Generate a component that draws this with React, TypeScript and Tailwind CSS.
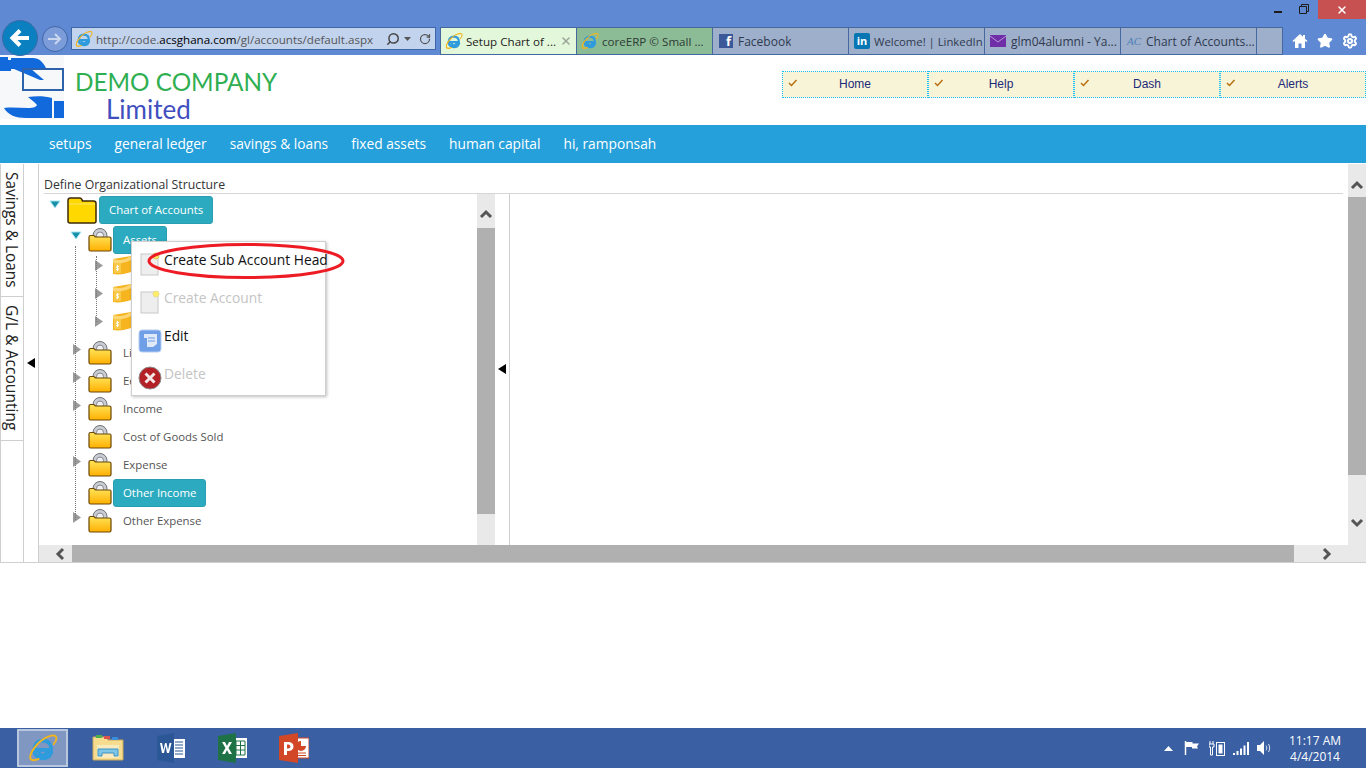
import { Star, Settings, RotateCw, Search, X } from 'lucide-react';

const ui = { fontFamily: '"Open Sans", "Noto Sans", sans-serif' };

function IeIcon({ size = 18 }: { size?: number }) {
  return (
    <svg width={size} height={size} viewBox="0 0 24 24" fill="none" className="shrink-0">
      <path d="M5 13.500h13.500c.3-4.500-2.400-7.500-6.500-7.500-4.300 0-7 3.300-7 7.300 0 4.200 2.900 7 7 7 3 0 5.200-1.300 6.200-3.800h-3.600c-.6.900-1.500 1.300-2.600 1.300-2 0-3.200-1.200-3.300-3" stroke="#2e9bdc" strokeWidth="3" />
      <path d="M2 20.500C.5 17 7 8 13 4.500c4-2.300 8.500-3.500 9.500-1.500.8 1.500-.3 3.800-2 6" stroke="#f2b51d" strokeWidth="1.500" strokeLinecap="round" />
      <path d="M2 20.500c1 2 4 1.500 6.500.2" stroke="#f2b51d" strokeWidth="1.500" strokeLinecap="round" />
    </svg>
  );
}

function Tab({ label, icon, tone, children }: { label: string; icon: React.ReactNode; tone: string; children?: React.ReactNode }) {
  return (
    <div className={`flex h-full w-[136px] shrink-0 items-center gap-[3px] border-r border-[#44689f] pl-[4px] ${tone}`}>
      {icon}
      <span className="overflow-hidden whitespace-nowrap pt-[2px]">{label}</span>
      {children}
    </div>
  );
}

function MenuCell({ label }: { label: string }) {
  return (
    <div className="relative flex h-full w-[146px] items-center justify-center border border-dotted border-[#19c2ff] pb-[1px] text-[12px] text-[#1b2a78]" style={{ fontFamily: '"Liberation Sans", sans-serif' }}>
      <svg width="10" height="8" viewBox="0 0 10 8" className="absolute left-[5px] top-[7px]">
        <path d="M1 4l2.500 2.500L8.500 1" stroke="#b8700f" strokeWidth="1.500" fill="none" />
      </svg>
      {label}
    </div>
  );
}

function Logo() {
  return (
    <svg width="64" height="64" viewBox="0 0 64 64" className="shrink-0">
      <rect width="64" height="64" fill="#f7f8fa" />
      <path d="M0 2h8v3h3V3h22c6 0 10 4 13 10H30l14 12h-4L14 14h-3v2H0z" fill="#1269dc" />
      <rect x="23" y="14" width="40" height="21" fill="none" stroke="#2f62ad" strokeWidth="2" />
      <path d="M28 42c8-1 17-1 24 1v20H26C16 63 8 60 4 53c8-1 16 0 24 0 6 0 8-1 9-3-2-3-6-5-9-8z" fill="#1269dc" />
      <rect x="54" y="46" width="10" height="17" fill="#1269dc" />
    </svg>
  );
}

function Folder({ big, coin }: { big?: boolean; coin?: boolean }) {
  if (big) {
    return (
      <svg width="30" height="27" viewBox="0 0 30 27" className="shrink-0">
        <path d="M1 3.500C1 2 2 1 3.500 1h9C14 1 15 2 15.500 4h11C28 4 29 5 29 6.500V24c0 1-1 2-2 2H3c-1 0-2-1-2-2z" fill="#ffd800" stroke="#3c2a05" strokeWidth="1.500" />
        <path d="M2 7h26" stroke="#ffe566" />
      </svg>
    );
  }
  if (coin) {
    return (
      <svg width="20" height="20" viewBox="0 0 20 20" className="shrink-0">
        <path d="M1 4l18-3v16c-6 2-12 3-18 2z" fill="#f6b41f" />
        <path d="M1 4c6 2 12 1 18-3v4C13 8 7 9 1 8z" fill="#fbd777" />
        <rect x="2" y="8" width="7" height="10" fill="#f9c94b" />
        <path d="M5.500 10v6M7 11.500H4.800c-1 .8 0 1.500.7 1.500s1.700.8.700 1.700H4" stroke="#fff" strokeWidth="1" fill="none" />
      </svg>
    );
  }
  return (
    <svg width="24" height="24" viewBox="0 0 24 24" className="shrink-0">
      <defs>
        <linearGradient id="folderFill" x1="0" y1="0" x2="0" y2="1">
          <stop offset="0" stopColor="#ffe45a" />
          <stop offset="1" stopColor="#ffaf00" />
        </linearGradient>
      </defs>
      <circle cx="12" cy="7.500" r="7" fill="#c9ccd2" stroke="#6d6f73" />
      <circle cx="12" cy="7.500" r="3.500" fill="#eef0f2" stroke="#85888d" />
      <path d="M1 9c0-.8.500-1.500 1.500-1.500h3c1 0 1.500 1.500 2.500 1.500h13.500c.8 0 1.500.7 1.500 1.500V21.500c0 1-.7 1.500-1.500 1.500H2.500C1.500 23 1 22.500 1 21.500z" fill="url(#folderFill)" stroke="#6b4708" strokeWidth="1.200" />
    </svg>
  );
}

function Expander({ open }: { open?: boolean }) {
  if (open) {
    return (
      <svg width="12" height="10" viewBox="0 0 12 10" className="shrink-0">
        <path d="M1 1h10L6 8z" fill="#1c8fa8" stroke="#9ee8f5" strokeWidth="1" />
      </svg>
    );
  }
  return (
    <svg width="8" height="11" viewBox="0 0 8 11" className="shrink-0">
      <path d="M0 0l8 5.500L0 11z" fill="#9a9a9a" />
    </svg>
  );
}

function Pill({ label }: { label: string }) {
  return (
    <span className="flex h-[28px] items-center rounded-[3px] border border-[#2a9fb2] bg-[#2cabc0] px-[9px] whitespace-nowrap text-white">
      {label}
    </span>
  );
}

function TreeRow({ label, expander, selected }: { label?: string; expander?: boolean; selected?: boolean }) {
  return (
    <div className="flex h-[28px] items-center">
      <div className="-mt-[8px] flex w-[49px] justify-start pl-[34px]">
        {expander && <Expander />}
      </div>
      <Folder />
      <div className="ml-[1px]">
        {selected ? <Pill label={label ?? ''} /> : <span className="whitespace-nowrap pl-[10px] text-[#555]">{label}</span>}
      </div>
    </div>
  );
}

function SubRow() {
  return (
    <div className="flex h-[28px] items-center">
      <div className="flex w-[73px] pl-[56px]">
        <Expander />
      </div>
      <Folder coin />
    </div>
  );
}

function Chevron({ dir }: { dir: 'up' | 'down' | 'left' | 'right' }) {
  const d = {
    up: 'M2 9l5-5 5 5',
    down: 'M2 4l5 5 5-5',
    left: 'M9 2L4 7l5 5',
    right: 'M4 2l5 5-5 5',
  }[dir];
  return (
    <svg width="14" height="14" viewBox="0 0 14 14">
      <path d={d} fill="none" stroke="#555" strokeWidth="3" />
    </svg>
  );
}

function CaretLeft() {
  return (
    <svg width="8" height="10" viewBox="0 0 8 10">
      <path d="M8 0v10L0 5z" fill="#000" />
    </svg>
  );
}

function PageIcon({ faded }: { faded?: boolean }) {
  return (
    <svg width="20" height="24" viewBox="0 0 20 24" className="mt-[8px] shrink-0">
      <rect x="1" y="2" width="17" height="21" fill="#eeeeee" stroke="#c8c8c8" />
      <circle cx="16" cy="4" r="3" fill="#ffee66" stroke={faded ? '#e8dc90' : '#d8c850'} />
    </svg>
  );
}

function ContextMenu() {
  return (
    <div className="absolute left-[92px] top-[47px] z-10 flex h-[155px] w-[195px] flex-col border border-[#cfcfcf] bg-white pl-[6px] pt-[2px] text-[13.800px] shadow-[1px_1px_3px_rgba(0,0,0,0.25)]">
      <div className="flex h-[38px] items-start gap-[4px] pl-[2px]">
        <PageIcon />
        <span className="mt-[6px] whitespace-nowrap text-[#111]">Create Sub Account Head</span>
      </div>
      <div className="flex h-[38px] items-start gap-[4px] pl-[2px]">
        <PageIcon faded />
        <span className="mt-[6px] whitespace-nowrap text-[#c4c4c4]">Create Account</span>
      </div>
      <div className="flex h-[38px] items-start gap-[2px]">
        <svg width="24" height="24" viewBox="0 0 24 24" className="mt-[9px] shrink-0">
          <rect x="1" y="1" width="22" height="22" rx="3" fill="#6f9fe6" stroke="#b5cdf0" />
          <path d="M6 5h13v10l-4 3H9V9H6z" fill="#dfe9f8" />
          <path d="M10 9h7M10 12h7" stroke="#6f9fe6" />
        </svg>
        <span className="mt-[6px] text-[#111]">Edit</span>
      </div>
      <div className="flex h-[38px] items-start gap-[2px]">
        <svg width="24" height="24" viewBox="0 0 24 24" className="mt-[9px] shrink-0">
          <circle cx="12" cy="12" r="11" fill="#b32026" stroke="#8c8c8c" />
          <path d="M7.500 7.500l9 9M16.500 7.500l-9 9" stroke="#f3e7e7" strokeWidth="3" />
        </svg>
        <span className="mt-[7px] text-[#c4c4c4]">Delete</span>
      </div>
      {/* hand drawn annotation round the first item */}
      <svg width="200" height="38" viewBox="0 0 200 38" className="absolute left-[15px] top-[0px] overflow-visible">
        <ellipse cx="99" cy="19" rx="97" ry="16.500" fill="none" stroke="#ed1c24" strokeWidth="3" />
      </svg>
    </div>
  );
}

function Tree() {
  return (
    <div className="relative h-full min-w-0 flex-1 text-[11.400px]">
      {/* dotted connectors */}
      <div className="absolute left-[36px] top-[52px] h-[274px] border-l border-dotted border-[#777]" />
      <div className="absolute left-[57px] top-[62px] h-[66px] border-l border-dotted border-[#777]" />
      <ContextMenu />
      <div className="flex flex-col pt-[2px]">
        <div className="flex h-[28px] items-center">
          <div className="-mt-[10px] w-[28px] pl-[10px]">
            <Expander open />
          </div>
          <Folder big />
          <div className="ml-[2px]">
            <Pill label="Chart of Accounts" />
          </div>
        </div>
        <div className="mt-[2px] flex h-[28px] items-center">
          <div className="-mt-[8px] w-[49px] pl-[31px]">
            <Expander open />
          </div>
          <Folder />
          <div className="ml-[1px]">
            <Pill label="Assets" />
          </div>
        </div>
        <div className="-mt-[3px] flex flex-col">
          <SubRow />
          <SubRow />
          <SubRow />
        </div>
        <div className="mt-[4px] flex flex-col">
          <TreeRow label="Liabilities" expander />
          <TreeRow label="Equity" expander />
          <TreeRow label="Income" expander />
          <TreeRow label="Cost of Goods Sold" />
          <TreeRow label="Expense" expander />
          <TreeRow label="Other Income" selected />
          <TreeRow label="Other Expense" expander />
        </div>
      </div>
    </div>
  );
}

function Workspace() {
  return (
    <div className="flex h-[400px] border-b border-[#cfcfcf] border-t border-t-white">
      {/* vertical tabs */}
      <div className="flex w-[24px] shrink-0 flex-col border-x border-[#cfcfcf]">
        <div className="flex h-[133px] items-center justify-start border-b border-[#cfcfcf] pt-[8px] pr-[1px] [writing-mode:vertical-rl]">
          <span className="whitespace-nowrap text-[15.400px] text-[#222]">Savings &amp; Loans</span>
        </div>
        <div className="flex h-[144px] items-center justify-start border-b border-[#cfcfcf] pt-[8px] pr-[1px] [writing-mode:vertical-rl]">
          <span className="whitespace-nowrap text-[15.600px] text-[#222]">G/L &amp; Accounting</span>
        </div>
      </div>
      <div className="flex w-[15px] shrink-0 items-center justify-center border-r border-[#cfcfcf]">
        <CaretLeft />
      </div>
      <div className="flex min-w-0 flex-1 flex-col">
        <div className="flex min-h-0 flex-1">
          <div className="flex min-w-0 flex-1 flex-col">
            <div className="mx-[5px] flex h-[30px] items-end border-b border-[#d6d6d6] pb-0 text-[12.300px] leading-[16px] text-[#333]">
              Define Organizational Structure
            </div>
            <div className="flex min-h-0 flex-1">
              <Tree />
              {/* tree scrollbar */}
              <div className="flex w-[18px] shrink-0 flex-col bg-[#e9e9e9]">
                <div className="flex h-[34px] items-end justify-center pb-[6px]">
                  <Chevron dir="up" />
                </div>
                <div className="h-[286px] bg-[#b0b0b0]" />
              </div>
              <div className="flex w-[15px] shrink-0 items-center justify-center border-r border-[#cfcfcf] pb-[1px]">
                <CaretLeft />
              </div>
              <div className="w-[838px] shrink-0" />
            </div>
          </div>
          {/* page scrollbar */}
          <div className="flex w-[18px] shrink-0 flex-col bg-[#e9e9e9]">
            <div className="flex h-[33px] items-end justify-center pb-[4px]">
              <Chevron dir="up" />
            </div>
            <div className="h-[278px] bg-[#b0b0b0]" />
            <div className="flex flex-1 items-end justify-center pb-[15px]">
              <Chevron dir="down" />
            </div>
          </div>
        </div>
        {/* bottom scrollbar */}
        <div className="flex h-[17px] shrink-0 bg-[#e9e9e9]">
          <div className="flex w-[33px] items-center justify-center pl-[11px]">
            <Chevron dir="left" />
          </div>
          <div className="w-[1222px] bg-[#b0b0b0]" />
          <div className="flex flex-1 items-center justify-start pl-[26px]">
            <Chevron dir="right" />
          </div>
        </div>
      </div>
    </div>
  );
}

function Taskbar() {
  return (
    <div className="flex h-[40px] items-center bg-[#3a5fa3] text-white">
      <div className="ml-[17px] flex h-[38px] w-[51px] items-center justify-center border-2 border-[#b9c7de] bg-[#7f97c1]">
        <IeIcon size={30} />
      </div>
      <svg width="32" height="32" viewBox="0 0 32 32" className="ml-[24px]">
        <path d="M1 5h13l2 3h15v20H1z" fill="#f6dc8e" stroke="#caa95a" />
        <path d="M4 3h6v3H4z" fill="#4cae4f" />
        <path d="M12 4h6v3h-6z" fill="#d9534f" />
        <path d="M20 5h6v3h-6z" fill="#3a8fdc" />
        <path d="M5 13h22v13H5z" fill="#f9ebbd" />
        <path d="M6 24v-7h20v7h-4v-3H10v3z" fill="#7cc6e8" stroke="#3f93c4" />
      </svg>
      <svg width="28" height="30" viewBox="0 0 28 30" className="ml-[33px]">
        <path d="M15 6h13v19H15z" fill="#fff" />
        <path d="M18 9h8M18 12h8M18 15h8M18 18h8M18 21h8" stroke="#2b5797" />
        <path d="M0 3l17-3v30L0 27z" fill="#2b5797" />
        <path d="M3 10h2l1.500 7L8 10h1.500l1.500 7 1.500-7h2l-2.500 10h-2L8.500 13 7 20H5z" fill="#fff" />
      </svg>
      <svg width="29" height="30" viewBox="0 0 29 30" className="ml-[33px]">
        <path d="M15 5h14v20H15z" fill="#fff" />
        <path d="M18 8h9v14h-9zM18 12.500h9M18 17h9M22.500 8v14" fill="none" stroke="#1f7246" />
        <path d="M0 3l18-3v30L0 27z" fill="#1f7246" />
        <path d="M4 9h3l2 4 2-4h3l-3.500 6 3.500 6h-3l-2-4-2 4H4l3.500-6z" fill="#fff" />
      </svg>
      <svg width="30" height="30" viewBox="0 0 30 30" className="ml-[32px]">
        <path d="M15 5h15v20H15z" fill="#fff" stroke="#d24726" />
        <path d="M22 8a5 5 0 1 0 5 5h-5z" fill="#d24726" />
        <path d="M18 20h9M18 22.500h9" stroke="#d24726" />
        <path d="M0 3l19-3v30L0 27z" fill="#d24726" />
        <path d="M5 9h5c6 0 6 9 0 9H8v4H5zM8 11.500v4h1.500c2.500 0 2.500-4 0-4z" fill="#fff" fillRule="evenodd" />
      </svg>
      <div className="ml-auto flex items-center">
        <svg width="9" height="5" viewBox="0 0 9 5"><path d="M0 5l4.500-5L9 5z" fill="#fff" /></svg>
        <svg width="16" height="14" viewBox="0 0 16 14" className="ml-[11px]">
          <path d="M1.500 0v14" stroke="#fff" strokeWidth="1.500" />
          <path d="M2 1h6.500v1.500H15l-2 3 1 2H8V6H2z" fill="#fff" />
        </svg>
        <svg width="16" height="16" viewBox="0 0 16 16" className="ml-[9px]">
          <path d="M1 1v3M4 1v3M0 4h5v3H3.500v8H1.500V7H0z" fill="none" stroke="#fff" />
          <rect x="7.500" y="2.500" width="8" height="13" fill="none" stroke="#fff" />
          <rect x="9.500" y="4.500" width="4" height="9" fill="#fff" />
        </svg>
        <svg width="16" height="13" viewBox="0 0 16 13" className="ml-[8px]">
          <path d="M0 11h2v2H0zM3.500 9h2v4h-2zM7 6.500h2V13H7zM10.500 3.500h2V13h-2z" fill="#fff" />
          <path d="M14 0h2v13h-2z" fill="#fff" />
        </svg>
        <svg width="15" height="14" viewBox="0 0 15 14" className="ml-[8px]">
          <path d="M0 4h3l4-4v14l-4-4H0z" fill="#fff" />
          <path d="M9 4.500c1 1.500 1 3.500 0 5M11.500 3c1.500 2.500 1.500 5.500 0 8" fill="none" stroke="#d7dfee" />
        </svg>
        <div className="ml-[7px] flex w-[72px] flex-col items-center pt-[1px] text-[12px] leading-[16px]" style={ui}>
          <span>11:17 AM</span>
          <span>4/4/2014</span>
        </div>
        <div className="w-[15px]" />
      </div>
    </div>
  );
}

export default function App() {
  return (
    <div className="flex h-[768px] w-[1366px] flex-col overflow-hidden bg-white" style={ui}>
      {/* browser chrome */}
      <div className="flex h-[55px] shrink-0 flex-col bg-[#5f89d3]">
        <div className="flex h-[27px] shrink-0 items-start justify-end">
          <div className="mr-[17px] mt-[11px] h-[2px] w-[8px] bg-[#1d1d1d]" />
          <svg width="10" height="10" viewBox="0 0 10 10" className="mr-[9px] mt-[4px]">
            <path d="M2.500 2.500V.5h7v7h-2M.5 2.500h7v7h-7z" fill="none" stroke="#1d1d1d" strokeWidth="1" />
          </svg>
          <div className="flex h-[19px] w-[48px] items-center justify-center bg-[#c75050]">
            <X size={12} strokeWidth={3} className="text-white" />
          </div>
        </div>
        <div className="flex h-[28px] items-stretch">
          <div className="relative z-10 -mt-[7px] ml-[2px] flex h-[36px] w-[36px] shrink-0 items-center justify-center rounded-full border border-[#3a6aa5] bg-[#0a80c0]">
            <svg width="22" height="20" viewBox="0 0 22 20">
              <path d="M20 10H4M11 2.500L3.500 10l7.500 7.500" fill="none" stroke="#fff" strokeWidth="4" />
            </svg>
          </div>
          <div className="ml-[4px] mt-[-1px] flex h-[26px] w-[26px] shrink-0 items-center justify-center rounded-full border border-[#3f67a5] bg-[#7c9cd9]">
            <svg width="16" height="14" viewBox="0 0 16 14">
              <path d="M1 7h12M8 2l5 5-5 5" fill="none" stroke="#c9d6ee" strokeWidth="2" />
            </svg>
          </div>
          <div className="ml-[3px] flex h-[23px] w-[365px] shrink-0 items-center border border-[#3f67a5] bg-[#c2d3ee] pl-[3px] pr-[4px]">
            <IeIcon />
            <span className="ml-[3px] whitespace-nowrap pt-[2px] text-[11.600px] text-[#555]">
              http://code.<span className="text-black">acsghana.com</span>/gl/accounts/default.aspx
            </span>
            <Search size={14} strokeWidth={2.500} className="ml-auto -scale-x-100 text-[#444]" />
            <svg width="7" height="4" viewBox="0 0 7 4" className="ml-[4px]"><path d="M0 0h7L3.500 4z" fill="#555" /></svg>
            <RotateCw size={12} strokeWidth={2.500} className="ml-[8px] text-[#555]" />
          </div>
          <div className="ml-[4px] flex h-full items-center border-y border-l border-[#44689f]">
            <Tab label="Setup Chart of ..." tone="bg-[#e3f7da] text-[#222] text-[11.600px]" icon={<IeIcon />}>
              <X size={12} strokeWidth={3} className="ml-auto mr-[4px] shrink-0 text-[#9aa59a]" />
            </Tab>
            <Tab label="coreERP © Small ..." tone="bg-[#8cbc96] text-[#2c3a35] text-[11.600px]" icon={<IeIcon />} />
            <Tab
              label="Facebook"
              tone="bg-[#9eafcb] text-[#2f3a4f] text-[12px]"
              icon={
                <span className="ml-[2px] mr-[2px] flex h-[14px] w-[14px] shrink-0 items-end justify-end bg-[#3b5998] pr-[2px] text-[13px] font-bold leading-[13px] text-white">f</span>
              }
            />
            <Tab
              label="Welcome! | LinkedIn"
              tone="bg-[#9eafcb] text-[#2f3a4f] text-[11.300px]"
              icon={
                <span className="ml-[1px] mr-[1px] flex h-[16px] w-[16px] shrink-0 items-center justify-center rounded-[2px] bg-[#0976b4] text-[11px] font-bold text-white">in</span>
              }
            />
            <Tab
              label="glm04alumni - Ya..."
              tone="bg-[#9eafcb] text-[#2f3a4f] text-[12px]"
              icon={
                <svg width="16" height="12" viewBox="0 0 16 12" className="ml-[1px] mr-[2px] shrink-0">
                  <rect width="16" height="12" fill="#6f2da8" />
                  <path d="M0 1l8 6 8-6" fill="none" stroke="#b79ad6" />
                </svg>
              }
            />
            <Tab
              label="Chart of Accounts..."
              tone="bg-[#9eafcb] text-[#2f3a4f] text-[12px]"
              icon={<span className="ml-[2px] mr-[1px] w-[15px] shrink-0 text-[11px] italic leading-none text-[#4d80b8]" style={{ fontFamily: '"Liberation Serif", serif' }}>AC</span>}
            />
            <div className="h-full w-[26px] border-r border-[#44689f] bg-[#9eafcb]" />
          </div>
          <div className="ml-auto flex items-center gap-[9px] pr-[8px] text-white">
            <svg width="16" height="16" viewBox="0 0 16 16">
              <path d="M8 1L0.500 8l1 1L3 7.800V15h3.500v-4.500h3V15H13V7.800L14.500 9l1-1L13 5.700V2h-2v1.800z" fill="currentColor" />
            </svg>
            <Star size={16} fill="currentColor" />
            <Settings size={16} strokeWidth={3} />
          </div>
        </div>
      </div>

      {/* company header */}
      <div className="flex h-[70px] shrink-0 bg-white">
        <Logo />
        <div className="ml-[11px] flex flex-col pt-[13px]" style={{ fontFamily: 'Lato, sans-serif' }}>
          <span className="whitespace-nowrap text-[24.300px] leading-[27px] text-[#2fae52]">DEMO COMPANY</span>
          <span className="ml-[31px] text-[26px] leading-[28px] text-[#3f4fc0]">Limited</span>
        </div>
        <div className="ml-auto mt-[16px] flex h-[27px] w-[584px] bg-[#f8f4d8]">
          <MenuCell label="Home" />
          <MenuCell label="Help" />
          <MenuCell label="Dash" />
          <MenuCell label="Alerts" />
        </div>
      </div>

      {/* main nav */}
      <div className="flex h-[38px] shrink-0 items-center gap-[23px] bg-[#26a0da] pl-[49px] text-[13.750px] text-white">
        <span>setups</span>
        <span>general ledger</span>
        <span>savings &amp; loans</span>
        <span>fixed assets</span>
        <span>human capital</span>
        <span>hi, ramponsah</span>
      </div>

      <Workspace />

      <div className="flex-1" />
      <Taskbar />
    </div>
  );
}
